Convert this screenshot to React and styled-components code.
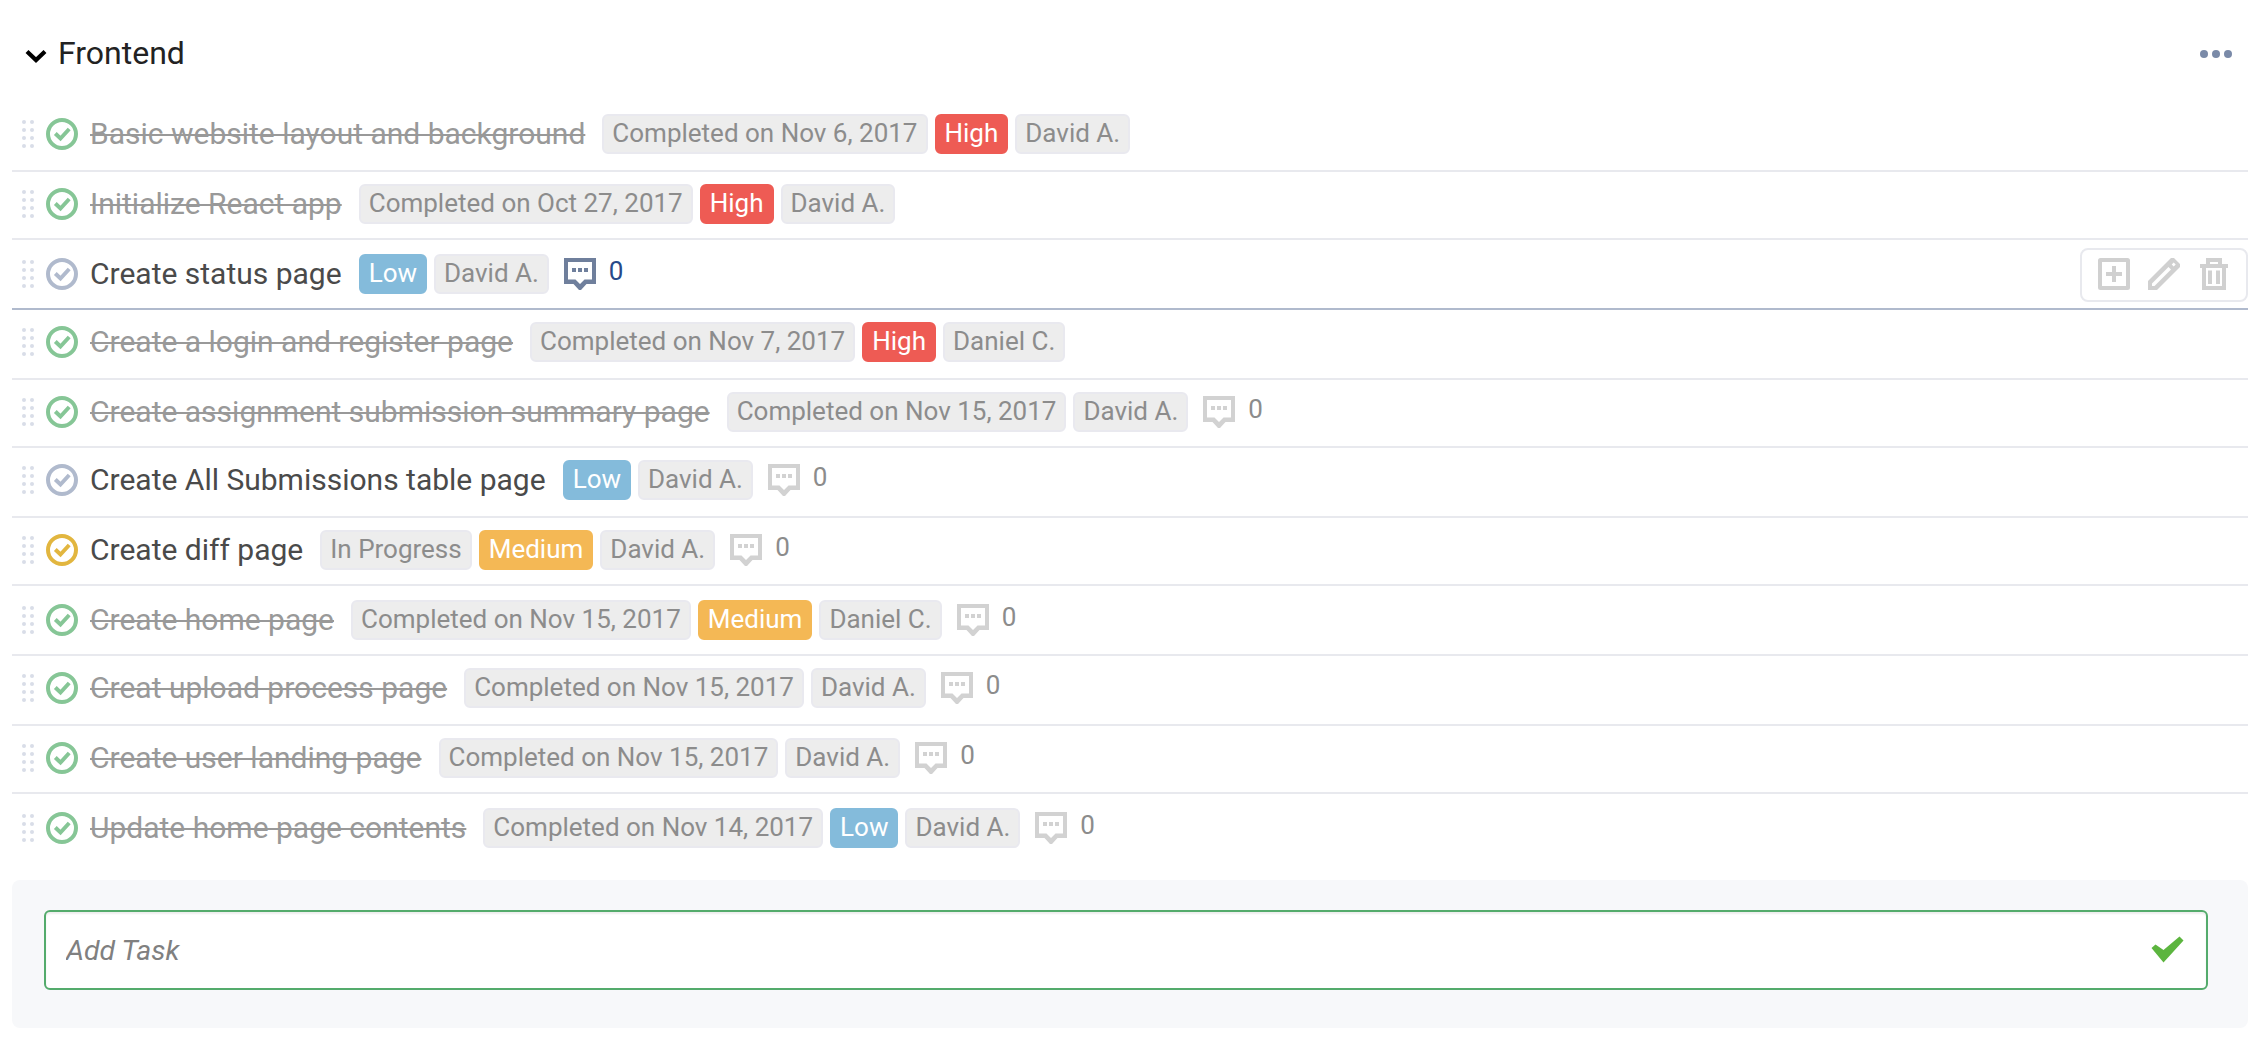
import React from 'react';
import styled, { createGlobalStyle } from 'styled-components';

const GlobalStyle = createGlobalStyle`
  *, *::before, *::after { box-sizing: border-box; }
  body { margin: 0; background: #fff; }
`;

const Board = styled.main`
  height: 1038px;
  padding: 0 6px 0 12px;
  overflow: hidden;
  background: #fff;
  font-family: Roboto, 'Liberation Sans', sans-serif;
`;

const Header = styled.header`
  display: flex;
  align-items: center;
  height: 102px;
  padding: 4px 16px 0 13px;
`;

const Chevron = styled.svg`
  width: 22px;
  height: 14px;
  margin-top: 6px;
`;

const Heading = styled.h1`
  flex: 1;
  margin: 0 0 0 11px;
  font-size: 32px;
  font-weight: 400;
  line-height: 38px;
  color: #222;
`;

const MoreButton = styled.button`
  display: flex;
  gap: 4px;
  padding: 2px 0 0;
  border: 0;
  background: none;

  i {
    width: 8px;
    height: 8px;
    border-radius: 50%;
    background: #7a8aa8;
  }
`;

const List = styled.ul`
  margin: 0;
  padding: 0;
  list-style: none;
`;

const Row = styled.li`
  display: flex;
  align-items: flex-start;
  height: ${(p) => p.$height}px;
  padding: ${(p) => p.$top}px 0 0 10px;
  border-bottom: 2px solid ${(p) => (p.$last ? 'transparent' : p.$hovered ? '#b0bacd' : '#e8e9ee')};
`;

const Handle = styled.span`
  display: grid;
  grid-template-columns: 4px 4px;
  grid-auto-rows: 4px;
  gap: 4px;
  margin-top: 6px;

  i {
    border-radius: 50%;
    background: #d9dde8;
  }
`;

const StatusIcon = styled.svg`
  flex: none;
  width: 32px;
  height: 32px;
  margin: 4px 12px 0;
  fill: none;
  stroke: ${(p) => p.$color};
  stroke-width: 4;
`;

const Title = styled.span`
  margin-right: 17px;
  padding-top: 2px;
  font-size: 30px;
  line-height: 36px;
  white-space: nowrap;
  color: ${(p) => (p.$done ? '#999' : '#4a4a4a')};
  text-decoration: ${(p) => (p.$done ? 'line-through' : 'none')};
  text-decoration-thickness: 2px;
`;

const Tags = styled.div`
  display: flex;
  gap: 7px;
`;

const tones = {
  plain: ['#ededed', '#e9e9ef', '#8c8c8c'],
  High: ['#ee5b54', '#ee5b54', '#fff'],
  Medium: ['#f4b855', '#f4b855', '#fff'],
  Low: ['#84bbdb', '#84bbdb', '#fff'],
};

const Tag = styled.span`
  height: 40px;
  padding: 0 8px;
  border: 2px solid ${(p) => tones[p.$tone][1]};
  border-radius: 6px;
  background: ${(p) => tones[p.$tone][0]};
  color: ${(p) => tones[p.$tone][2]};
  font-size: 26px;
  line-height: 35px;
  white-space: nowrap;
`;

const Comments = styled.span`
  display: flex;
  gap: 13px;
  margin: 4px 0 0 15px;
  font-size: 26px;
  line-height: 26px;
  color: ${(p) => (p.$hovered ? '#27498a' : '#8c8c8c')};

  svg {
    width: 32px;
    height: 32px;
    color: ${(p) => (p.$hovered ? '#6f7f9c' : '#d2d2d2')};
  }
`;

const Actions = styled.div`
  display: flex;
  gap: 18px;
  width: 168px;
  height: 54px;
  margin: -6px 0 0 auto;
  padding: 8px 16px;
  border: 2px solid #e8e9ee;
  border-radius: 8px;
  color: #d0d0d0;

  svg {
    width: 32px;
    height: 32px;
    fill: none;
    stroke: currentColor;
    stroke-width: 4;
  }
`;

const AddPanel = styled.form`
  height: 148px;
  margin-top: 16px;
  padding: 30px 40px 38px 32px;
  border-radius: 8px;
  background: #f7f8fa;
`;

const Field = styled.label`
  display: flex;
  align-items: center;
  height: 80px;
  padding: 0 22px 0 20px;
  border: 2px solid #54ab6c;
  border-radius: 6px;
  background: #fff;
  box-shadow: inset 0 2px 2px rgba(0, 0, 0, 0.07);
`;

const Input = styled.input`
  flex: 1;
  padding: 2px 0 0;
  border: 0;
  outline: 0;
  background: none;
  font: 400 28.4px/34px Roboto, 'Liberation Sans', sans-serif;

  &::placeholder {
    font-style: italic;
    color: #808080;
    opacity: 1;
  }
`;

const SubmitIcon = styled.svg`
  width: 33px;
  height: 27px;
  margin-top: -2px;
`;

const done = '#86c696';
const open = '#b0bacd';
const active = '#e2b63f';

const tasks = [
  { title: 'Basic website layout and background', status: 'Completed on Nov 6, 2017', priority: 'High', who: 'David A.', height: 70, top: 12 },
  { title: 'Initialize React app', status: 'Completed on Oct 27, 2017', priority: 'High', who: 'David A.', height: 68, top: 12 },
  { title: 'Create status page', priority: 'Low', who: 'David A.', comments: 0, hovered: true, height: 70, top: 14 },
  { title: 'Create a login and register page', status: 'Completed on Nov 7, 2017', priority: 'High', who: 'Daniel C.', height: 70, top: 12 },
  { title: 'Create assignment submission summary page', status: 'Completed on Nov 15, 2017', who: 'David A.', comments: 0, height: 68, top: 12 },
  { title: 'Create All Submissions table page', priority: 'Low', who: 'David A.', comments: 0, height: 70, top: 12 },
  { title: 'Create diff page', status: 'In Progress', priority: 'Medium', who: 'David A.', comments: 0, height: 68, top: 12 },
  { title: 'Create home page', status: 'Completed on Nov 15, 2017', priority: 'Medium', who: 'Daniel C.', comments: 0, height: 70, top: 14 },
  { title: 'Creat upload process page', status: 'Completed on Nov 15, 2017', who: 'David A.', comments: 0, height: 70, top: 12 },
  { title: 'Create user landing page', status: 'Completed on Nov 15, 2017', who: 'David A.', comments: 0, height: 68, top: 12 },
  { title: 'Update home page contents', status: 'Completed on Nov 14, 2017', priority: 'Low', who: 'David A.', comments: 0, height: 70, top: 14 },
];

function CommentIcon() {
  return (
    <svg viewBox="0 0 32 32">
      <path
        d="M0 0H32V26H22.500L17 32H15L9.500 26H0ZM4 4V21.500H11.500L16 26L20.500 21.500H28V4Z"
        fill="currentColor"
        fillRule="evenodd"
      />
      <path d="M8 10h4v4H8zM14 10h4v4h-4zM20 10h4v4h-4z" fill="currentColor" />
    </svg>
  );
}

function RowActions() {
  return (
    <Actions>
      <svg viewBox="0 0 32 32">
        <rect x="2" y="2" width="28" height="28" rx="0.5" />
        <path d="M16 8V24M8 16H24" />
      </svg>
      <svg viewBox="0 0 32 32">
        <path
          d="M0 32V23L23 0H26L32 6V9L9 32ZM4 25.500V28H6.500L23 11.500L20.500 9ZM25.700 4.500L23.700 6.500L25.700 8.500L27.700 6.500Z"
          fill="currentColor"
          fillRule="evenodd"
          stroke="none"
        />
      </svg>
      <svg viewBox="0 0 32 32">
        <path d="M2 8H30M10 8V2H22V8M6 8V30H26V8" />
        <path d="M12 12.500V26M20 12.500V26" />
      </svg>
    </Actions>
  );
}

function Task({ task, last }) {
  const completed = Boolean(task.status && task.status.startsWith('Completed'));
  const color = completed ? done : task.status ? active : open;
  return (
    <Row $height={task.height} $top={task.top} $hovered={task.hovered} $last={last}>
      <Handle>
        {Array.from({ length: 8 }, (_, i) => <i key={i} />)}
      </Handle>
      <StatusIcon viewBox="0 0 32 32" $color={color}>
        <circle cx="16" cy="16" r="14" />
        <path d="M9.300 15.500L14.500 20.500L23.200 11" />
      </StatusIcon>
      <Title $done={completed}>{task.title}</Title>
      <Tags>
        {task.status && <Tag $tone="plain">{task.status}</Tag>}
        {task.priority && <Tag $tone={task.priority}>{task.priority}</Tag>}
        <Tag $tone="plain">{task.who}</Tag>
      </Tags>
      {task.comments !== undefined && (
        <Comments $hovered={task.hovered}>
          <CommentIcon />
          <span>{task.comments}</span>
        </Comments>
      )}
      {task.hovered && <RowActions />}
    </Row>
  );
}

export default function App() {
  return (
    <Board>
      <GlobalStyle />
      <Header>
        <Chevron viewBox="0 0 22 14">
          <path d="M2 2.500L11 11L20 2.500" fill="none" stroke="#000" strokeWidth="4.200" />
        </Chevron>
        <Heading>Frontend</Heading>
        <MoreButton aria-label="More">
          <i /><i /><i />
        </MoreButton>
      </Header>
      <List>
        {tasks.map((task, i) => (
          <Task key={task.title} task={task} last={i === tasks.length - 1} />
        ))}
      </List>
      <AddPanel>
        <Field>
          <Input placeholder="Add Task" />
          <SubmitIcon viewBox="0 0 33 27">
            <path d="M0.500 12L4.500 8.500L12.500 14L28.500 0.500L32.500 4.500L12.500 26.500Z" fill="#5cb53f" />
          </SubmitIcon>
        </Field>
      </AddPanel>
    </Board>
  );
}
